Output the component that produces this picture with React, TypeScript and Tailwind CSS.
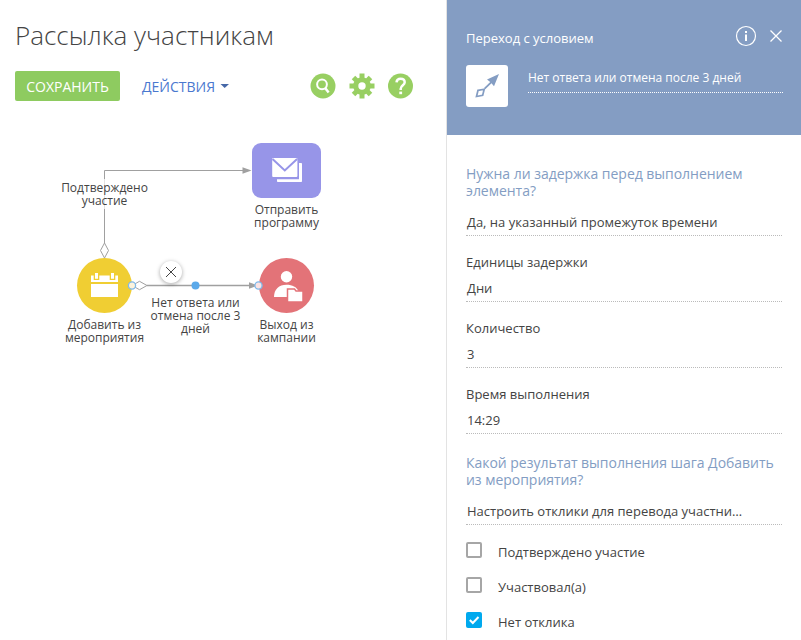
import React from "react";

const sans = "font-['Open_Sans','Noto_Sans',sans-serif]";

function Toolbar() {
  return (
    <div className="mt-[18px] ml-[15px] flex h-[30px] items-center">
      <button className="h-[30px] w-[105px] rounded-[2px] bg-[#8ecb60] pt-px text-center text-[14px] leading-[29px] whitespace-nowrap text-white">
        СОХРАНИТЬ
      </button>
      <button className="ml-[22px] flex items-center text-[14px] leading-[30px] whitespace-nowrap text-[#4a78cf]">
        <span className="w-[74px] pt-px text-left leading-[29px]">ДЕЙСТВИЯ</span>
        <svg className="ml-[4px]" width="10" height="6" viewBox="0 0 10 6">
          <path d="M0.5 1H9L4.7 5Z" fill="#4668a8" />
        </svg>
      </button>
      <div className="ml-[80px] flex items-center gap-[13px]">
        <svg width="26" height="26" viewBox="0 0 26 26">
          <circle cx="13" cy="13" r="12.5" fill="#98cf62" />
          <circle cx="12" cy="11.3" r="4.9" fill="none" stroke="#fff" strokeWidth="2" />
          <path d="M15 14.8L18.6 19.4" stroke="#fff" strokeWidth="2.5" />
        </svg>
        <svg width="26" height="26" viewBox="-13 -13 26 26">
          <g fill="#98cf62">
            <circle r="8.8" />
            <rect x="-2.5" y="-12.5" width="5" height="25" />
            <rect x="-12.5" y="-2.5" width="25" height="5" />
            <rect x="-2.5" y="-12" width="5" height="24" transform="rotate(45)" />
            <rect x="-2.5" y="-12" width="5" height="24" transform="rotate(-45)" />
          </g>
          <circle r="3.7" fill="#fff" />
        </svg>
        <svg width="26" height="26" viewBox="0 0 26 26">
          <circle cx="12.5" cy="13" r="12.5" fill="#98cf62" />
          <path d="M8.5 9.3C8.8 6.8 10.5 5.8 12.6 5.8C15 5.8 16.7 7.2 16.7 9.3C16.7 12.2 12.7 12.3 12.7 15.8V17" fill="none" stroke="#fff" strokeWidth="2.5" />
          <rect x="11.3" y="18.6" width="2.8" height="2.6" fill="#fff" />
        </svg>
      </div>
    </div>
  );
}

function Label({ place, lines }: { place: string; lines: string[] }) {
  return (
    <div className={`absolute flex flex-col items-center text-[12px] leading-[13px] whitespace-nowrap text-[#444] ${place}`}>
      {lines.map((line) => (
        <span key={line}>{line}</span>
      ))}
    </div>
  );
}

function Diagram() {
  return (
    <div className="relative h-[539px] w-full">
      <svg className="absolute top-0 left-0" width="446" height="539" viewBox="0 101 446 539">
        <g fill="none" stroke="#a0a0a0">
          <path d="M104.5 243V170.5H244" />
          <path d="M104.5 243L108.5 250.500L104.5 258L100.5 250.500Z" fill="#fff" />
          <path d="M147 285.500H250" strokeWidth="1.3" />
          <path d="M132 285.500L139.5 281.300L147 285.500L139.5 289.700Z" fill="#fff" />
        </g>
        <rect x="61" y="179" width="88" height="30" fill="#fff" fillOpacity="0.7" />
        <path d="M242.5 167.300L251.5 170.500L242.5 173.700Z" fill="#a0a0a0" />
        <path d="M249 282.300L258 285.500L249 288.700Z" fill="#a0a0a0" />

        <rect x="252" y="143" width="69" height="55" rx="9" fill="#9795e8" />
        <path d="M277 179.300H299V163H301.200Q302 163 302 163.800V181.200Q302 182 301.200 182H277.800Q277 182 277 181.200Z" fill="#fff" />
        <rect x="272.200" y="158" width="25.200" height="19" rx="1" fill="#fff" />
        <path d="M272.500 159L284.800 170.500L297.100 159" fill="none" stroke="#9795e8" strokeWidth="2" />

        <circle cx="104.500" cy="285.500" r="27.500" fill="#f0ce33" />
        <rect x="91" y="275.500" width="27" height="6.500" fill="#fff" />
        <path d="M93.700 273H99.300V280H93.700ZM109.700 273H115.300V280H109.700Z" fill="#f0ce33" />
        <path d="M95 273H98V278.700H95ZM111 273H114V278.700H111Z" fill="#fff" />
        <rect x="91" y="284" width="27" height="13" fill="#fff" />

        <circle cx="286.500" cy="285.500" r="27.500" fill="#e37378" />
        <circle cx="286.500" cy="276.700" r="5.700" fill="#fff" />
        <path d="M274 297C274 289 279 284.700 286.500 284.700C292.500 284.700 296.500 287 298.500 291V297Z" fill="#fff" />
        <path d="M287.500 289H294.500L296 291H303V302H287.500Z" fill="#fff" stroke="#e37378" strokeWidth="1.500" />

        <circle cx="132" cy="285.500" r="3.600" fill="#fcf3dc" stroke="#7fb9ea" strokeWidth="1.300" />
        <circle cx="258.500" cy="285.500" r="3.600" fill="#fbe3e4" stroke="#7fb9ea" strokeWidth="1.300" />
        <circle cx="195.500" cy="285.500" r="4" fill="#5aa9ea" />
      </svg>
      <div className="absolute top-[160px] left-[160px] flex h-[22px] w-[22px] items-center justify-center rounded-full bg-white shadow-[0_1px_4px_rgba(0,0,0,0.35)]">
        <svg width="12" height="12" viewBox="0 0 12 12">
          <path d="M1 1L11 11M11 1L1 11" stroke="#444" />
        </svg>
      </div>
      <Label place="top-[80px] left-[44px] w-[121px]" lines={["Подтверждено", "участие"]} />
      <Label place="top-[102px] left-[226px] w-[121px]" lines={["Отправить", "программу"]} />
      <Label place="top-[217px] left-[44px] w-[121px]" lines={["Добавить из", "мероприятия"]} />
      <Label place="top-[195px] left-[135px] w-[121px]" lines={["Нет ответа или", "отмена после 3", "дней"]} />
      <Label place="top-[217px] left-[226px] w-[121px]" lines={["Выход из", "кампании"]} />
    </div>
  );
}

function Heading({ className, lines }: { className: string; lines: string[] }) {
  return (
    <h2 className={`text-[14px] leading-[17px] tracking-[-0.03px] whitespace-nowrap text-[#839dc3] ${className}`}>
      {lines.map((line) => (
        <span key={line} className="block">{line}</span>
      ))}
    </h2>
  );
}

function Value({ className, children }: { className: string; children: React.ReactNode }) {
  return (
    <div className={`h-[24px] border-b border-dotted border-[#bbb] pl-px text-[13px] leading-[20px] whitespace-nowrap text-[#444] ${className}`}>
      {children}
    </div>
  );
}

function Field({ label, value }: { label: string; value: string }) {
  return (
    <div className="mt-[16px]">
      <div className="text-[13px] leading-[20px] text-[#444]">{label}</div>
      <Value className="mt-[6px]">{value}</Value>
    </div>
  );
}

function Option({ label, checked }: { label: string; checked?: boolean }) {
  return (
    <div className="flex h-[35px] items-start">
      {checked ? (
        <div className="h-[16px] w-[16px] rounded-[2px] bg-[#00a9ee]">
          <svg width="16" height="16" viewBox="0 0 16 16">
            <path d="M3.800 8L6.800 11L12.500 5" fill="none" stroke="#fff" strokeWidth="2" />
          </svg>
        </div>
      ) : (
        <div className="h-[16px] w-[16px] rounded-[2px] border-2 border-[#a6a6a6] bg-white" />
      )}
      <span className="ml-[16px] text-[13px] leading-[20px] whitespace-nowrap text-[#444]">{label}</span>
    </div>
  );
}

function Panel() {
  return (
    <aside className="flex w-[355px] flex-col border-l border-[#e3e3e3]">
      <header className="h-[135px] shrink-0 bg-[#849dc3] pt-[24px] pr-[18px] pl-[19px] text-white">
        <div className="flex h-[24px] items-center">
          <span className="mt-[4px] flex-1 text-[13px] leading-[20px] font-medium whitespace-nowrap">Переход с условием</span>
          <svg width="22" height="22" viewBox="0 0 22 22">
            <circle cx="11" cy="11" r="9.500" fill="none" stroke="#fff" strokeWidth="1.200" />
            <path d="M10 6H12V8H10ZM10 9.500H12V16H10Z" fill="#fff" />
          </svg>
          <svg className="mr-px ml-[13px]" width="12" height="12" viewBox="0 0 12 12">
            <path d="M.500 .500L11.500 11.500M11.500 .500L.500 11.500" stroke="#fff" strokeWidth="1.300" />
          </svg>
        </div>
        <div className="mt-[17px] flex items-start">
          <div className="h-[42px] w-[42px] rounded-[3px] bg-white">
            <svg width="42" height="42" viewBox="0 0 42 42">
              <path d="M33 9L21 14.500L24.200 17L18 23L19.300 24.300L25.500 18.200L28 21.300Z" fill="#849dc3" />
              <path d="M12 25.300L18.200 24.200L16.700 30.300L10.500 31.500Z" fill="none" stroke="#849dc3" strokeWidth="1.700" />
            </svg>
          </div>
          <div className="ml-[20px] h-[28px] flex-1 border-b border-dotted border-white text-[12px] leading-[25px] font-medium whitespace-nowrap">
            Нет ответа или отмена после 3 дней
          </div>
        </div>
      </header>
      <div className="flex-1 pt-[30px] pr-[19px] pl-[19px]">
        <Heading className="" lines={["Нужна ли задержка перед выполнением", "элемента?"]} />
        <Value className="mt-[13px]">Да, на указанный промежуток времени</Value>
        <Field label="Единицы задержки" value="Дни" />
        <Field label="Количество" value="3" />
        <Field label="Время выполнения" value="14:29" />
        <Heading className="mt-[20px]" lines={["Какой результат выполнения шага Добавить", "из мероприятия?"]} />
        <Value className="mt-[13px]">Настроить отклики для перевода участни…</Value>
        <div className="mt-[17px]">
          <Option label="Подтверждено участие" />
          <Option label="Участвовал(а)" />
          <Option label="Нет отклика" checked />
        </div>
      </div>
    </aside>
  );
}

export default function App() {
  return (
    <div className={`flex h-[640px] w-[801px] overflow-hidden bg-white ${sans}`}>
      <main className="w-[446px]">
        <h1 className="mt-[17px] ml-[15px] h-[36px] text-[26px] leading-[37px] font-light whitespace-nowrap text-[#444]">
          Рассылка участникам
        </h1>
        <Toolbar />
        <Diagram />
      </main>
      <Panel />
    </div>
  );
}
